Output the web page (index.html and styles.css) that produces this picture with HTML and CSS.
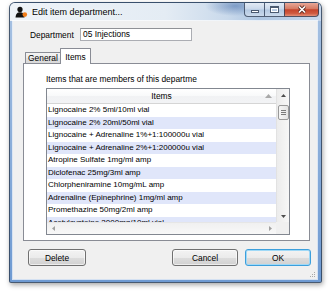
FILE: index.html
```html
<!DOCTYPE html>
<html lang="en">
<head>
    <meta charset="UTF-8">
    <title>Edit item department...</title>
    <link rel="stylesheet" href="styles.css">
</head>
<body>
    <div class="window">
        <div class="titlebar">
            <svg class="app-icon" width="13" height="12" viewBox="0 0 13 12">
                <circle cx="5" cy="3.4" r="2.6" fill="#111"/>
                <path d="M0.5 11.5 C0.8 7.5 2.6 6.2 5 6.2 C7.4 6.2 9.2 7.5 9.5 11.5 Z" fill="#111"/>
                <circle cx="9.8" cy="8.6" r="2.3" fill="#f07d1a"/>
            </svg>
            <span class="title">Edit item department...</span>
            <div class="caption">
                <span class="cap-btn min"><span class="min-glyph"></span></span>
                <span class="cap-btn max"><span class="max-glyph"></span></span>
                <span class="cap-btn close">
                    <svg width="10" height="9" viewBox="0 0 10 9">
                        <path d="M2 1.5 L8 7.5 M8 1.5 L2 7.5" stroke="#5a2a22" stroke-width="3.2"/>
                        <path d="M2 1.5 L8 7.5 M8 1.5 L2 7.5" stroke="#fff" stroke-width="1.7"/>
                    </svg>
                </span>
            </div>
        </div>
        <div class="frame">
            <div class="client">
                <div class="dept-row">
                    <label for="dept">Department</label>
                    <div class="field" id="dept">05 Injections</div>
                </div>

                <div class="tabs">
                    <div class="tab general">General</div>
                    <div class="tab active">Items</div>
                </div>

                <div class="panel">
                    <div class="panel-label">Items that are members of this departme</div>
                    <div class="list">
                        <div class="list-main">
                            <div class="list-header">
                                <span class="sort-spacer"></span>
                                <span>Items</span>
                                <span class="sort-arrow">
                                    <svg width="7" height="4" viewBox="0 0 7 4"><path d="M0 4 L3.5 0 L7 4 Z" fill="#a9a9a9"/></svg>
                                </span>
                            </div>
                            <div class="rows">
                                <div class="row">Lignocaine 2% 5ml/10ml vial</div>
                                <div class="row">Lignocaine 2% 20ml/50ml vial</div>
                                <div class="row">Lignocaine + Adrenaline 1%+1:100000u vial</div>
                                <div class="row">Lignocaine + Adrenaline 2%+1:200000u vial</div>
                                <div class="row">Atropine Sulfate 1mg/ml amp</div>
                                <div class="row">Diclofenac 25mg/3ml amp</div>
                                <div class="row">Chlorpheniramine 10mg/mL amp</div>
                                <div class="row">Adrenaline (Epinephrine) 1mg/ml amp</div>
                                <div class="row">Promethazine 50mg/2ml amp</div>
                                <div class="row">Acetylcysteine 2000mg/10ml vial</div>
                            </div>
                        </div>
                        <div class="vscroll">
                            <div class="sb-btn up">
                                <svg width="5" height="3" viewBox="0 0 5 3"><path d="M0 3 L2.5 0 L5 3 Z" fill="#4d4d4d"/></svg>
                            </div>
                            <div class="thumb"><span></span><span></span><span></span></div>
                            <div class="sb-btn down">
                                <svg width="5" height="3" viewBox="0 0 5 3"><path d="M0 0 L2.5 3 L5 0 Z" fill="#4d4d4d"/></svg>
                            </div>
                        </div>
                        <div class="hscroll">
                            <div class="sb-btn left">
                                <svg width="3" height="5" viewBox="0 0 3 5"><path d="M3 0 L0 2.5 L3 5 Z" fill="#a0a0a0"/></svg>
                            </div>
                            <div class="sb-btn right">
                                <svg width="3" height="5" viewBox="0 0 3 5"><path d="M0 0 L3 2.5 L0 5 Z" fill="#a0a0a0"/></svg>
                            </div>
                        </div>
                        <div class="corner"></div>
                    </div>
                </div>

                <div class="buttons">
                    <div class="btn delete">Delete</div>
                    <div class="btn cancel">Cancel</div>
                    <div class="btn ok">OK</div>
                </div>

                <svg class="grip" width="7" height="7" viewBox="0 0 7 7">
                    <rect x="5" y="1" width="1" height="1" fill="#a8a8a8"/>
                    <rect x="3" y="3" width="1" height="1" fill="#a8a8a8"/>
                    <rect x="5" y="3" width="1" height="1" fill="#a8a8a8"/>
                    <rect x="1" y="5" width="1" height="1" fill="#a8a8a8"/>
                    <rect x="3" y="5" width="1" height="1" fill="#a8a8a8"/>
                    <rect x="5" y="5" width="1" height="1" fill="#a8a8a8"/>
                </svg>
            </div>
        </div>
    </div>
</body>
</html>
```

FILE: styles.css
```css
/* Базовые настройки */
* {
    box-sizing: border-box;
}

body {
    margin: 0;
    width: 334px;
    height: 294px;
    overflow: hidden;
    background: #fff;
    font-family: "Liberation Sans", Arial, sans-serif;
    font-size: 8.4px;
    color: #000;
}

/* Окно */
.window {
    margin: 2px 0 0 9px;
    width: 313px;
    height: 281px;
    display: flex;
    flex-direction: column;
    border: 1px solid rgba(40, 55, 75, 0.75);
    border-radius: 6px 6px 2px 2px;
    background: linear-gradient(180deg, #a8c2e2, #6e9ad2);
    box-shadow: 1px 2px 5px rgba(0, 0, 0, 0.35);
    overflow: hidden;
}

.titlebar {
    height: 18px;
    flex-shrink: 0;
    display: flex;
    align-items: center;
    background:
        radial-gradient(ellipse 30px 10px at 225px 3px, rgba(70, 110, 170, 0.55), rgba(70, 110, 170, 0)),
        linear-gradient(90deg, #eef3f8 0%, #e4ecf4 50%, #c9d9eb 70%, #aec6e2 80%, #c8d8ec 100%);
}

.app-icon {
    margin-left: 5px;
}

.title {
    margin-left: 4px;
    font-size: 9px;
    text-shadow: 0 0 4px #fff;
}

.caption {
    margin-left: auto;
    margin-right: 2px;
    align-self: flex-start;
    display: flex;
}

.cap-btn {
    height: 14px;
    display: flex;
    align-items: center;
    justify-content: center;
    border: 1px solid rgba(45, 60, 85, 0.8);
    border-top: none;
    background: linear-gradient(#e2eaf4, #c8d7ea 48%, #b3c8e1 52%, #cbdaec);
}

.min {
    width: 20px;
    border-right: none;
    border-radius: 0 0 0 4px;
}

.max {
    width: 20px;
    border-right: none;
}

.close {
    width: 35px;
    border-radius: 0 0 4px 0;
    background: linear-gradient(#e8a898, #d67a63 45%, #c5442c 52%, #d05a40 80%, #e4907a);
}

.min-glyph {
    width: 8px;
    height: 3px;
    margin-top: 4px;
    background: #fff;
    border: 1px solid #4b5a70;
}

.max-glyph {
    width: 9px;
    height: 7px;
    border: 1px solid #4b5a70;
    box-shadow: inset 0 0 0 1px #fff;
    border-top-width: 2px;
}

/* Рамка и клиентская область */
.frame {
    flex: 1;
    display: flex;
    padding: 0 4px 3px 3px;
}

.client {
    flex: 1;
    display: flex;
    flex-direction: column;
    background: #f0f0f0;
    box-shadow: 0 0 0 1px rgba(255, 255, 255, 0.7);
}

.dept-row {
    display: flex;
    align-items: center;
    height: 13px;
    margin: 7px 0 0 17px;
}

.dept-row label {
    width: 50px;
}

.field {
    width: 112px;
    height: 13px;
    padding-left: 2px;
    line-height: 11px;
    background: #fff;
    border: 1px solid #abadb3;
    border-top-color: #8f9196;
}

/* Вкладки */
.tabs {
    position: relative;
    z-index: 1;
    display: flex;
    align-items: flex-end;
    height: 15px;
    margin: 7px 0 0 10px;
}

.tab {
    display: flex;
    align-items: center;
    justify-content: center;
    border: 1px solid #898c95;
    border-bottom: none;
    border-radius: 1px 1px 0 0;
}

.tab.general {
    width: 36px;
    height: 11px;
    margin-left: 2px;
    background: linear-gradient(#f4f4f4, #eaeaea 50%, #e0e0e0 51%, #d9d9d9);
}

.tab.active {
    width: 31px;
    height: 16px;
    margin-left: -1px;
    margin-bottom: -1px;
    padding-top: 1px;
    background: #fff;
}

.panel {
    width: 287px;
    height: 178px;
    margin-left: 10px;
    padding: 10px 0 0 22px;
    background: #fff;
    border: 1px solid #898c95;
}

.panel-label {
    height: 10px;
    line-height: 10px;
    white-space: nowrap;
}

/* Список */
.list {
    width: 244px;
    height: 147px;
    margin-top: 4px;
    display: grid;
    grid-template-columns: 229px 13px;
    grid-template-rows: 133px 12px;
    border: 1px solid #828790;
}

.list-main {
    display: flex;
    flex-direction: column;
    overflow: hidden;
}

.list-header {
    height: 15px;
    flex-shrink: 0;
    display: flex;
    align-items: center;
    justify-content: space-between;
    background: linear-gradient(#ffffff, #f8f9fa 50%, #f1f2f4 51%, #f2f3f5);
    border-bottom: 1px solid #d5d5d5;
}

.sort-spacer,
.sort-arrow {
    width: 14px;
    display: flex;
    justify-content: center;
}

.rows {
    flex: 1;
    overflow: hidden;
}

.row {
    height: 12.5px;
    line-height: 12.5px;
    padding-left: 1px;
    font-size: 8px;
    white-space: nowrap;
    overflow: hidden;
}

.row:nth-child(even) {
    background: #e0e6fa;
}

.vscroll {
    display: flex;
    flex-direction: column;
    align-items: center;
    background: linear-gradient(90deg, #ececec, #f7f7f7);
    border-left: 1px solid #e2e2e2;
}

.sb-btn {
    display: flex;
    align-items: center;
    justify-content: center;
}

.sb-btn.up {
    width: 100%;
    height: 13px;
}

.sb-btn.down {
    width: 100%;
    height: 11px;
    margin-top: auto;
}

.thumb {
    width: 11px;
    height: 15px;
    margin-top: 3px;
    display: flex;
    flex-direction: column;
    align-items: center;
    justify-content: center;
    gap: 1px;
    border: 1px solid #999;
    border-radius: 2px;
    background: linear-gradient(90deg, #f6f6f6, #e3e3e3);
}

.thumb span {
    width: 5px;
    height: 1px;
    background: #7a7a7a;
}

.hscroll {
    display: flex;
    justify-content: space-between;
    background: linear-gradient(#f0f0f0, #f8f8f8);
    border-top: 1px solid #e6e6e6;
}

.sb-btn.left,
.sb-btn.right {
    width: 12px;
}

.corner {
    background: #f0f0f0;
}

/* Кнопки */
.buttons {
    display: flex;
    margin-top: 8px;
    padding: 0 6px 0 15px;
}

.btn {
    height: 17px;
    display: flex;
    align-items: center;
    justify-content: center;
    border: 1px solid #707070;
    border-radius: 3px;
    background: linear-gradient(#f3f3f3, #ebebeb 50%, #dddddd 51%, #d1d1d1);
    box-shadow: inset 0 0 0 1px rgba(255, 255, 255, 0.6);
}

.btn.delete {
    width: 58px;
}

.btn.cancel {
    width: 66px;
    margin-left: auto;
}

.btn.ok {
    width: 66px;
    margin-left: 7px;
    border-color: #3c9fdc;
    box-shadow: inset 0 0 0 1px #9fd9f7;
}

.grip {
    margin: auto 1px 1px 0;
    align-self: flex-end;
}
```
